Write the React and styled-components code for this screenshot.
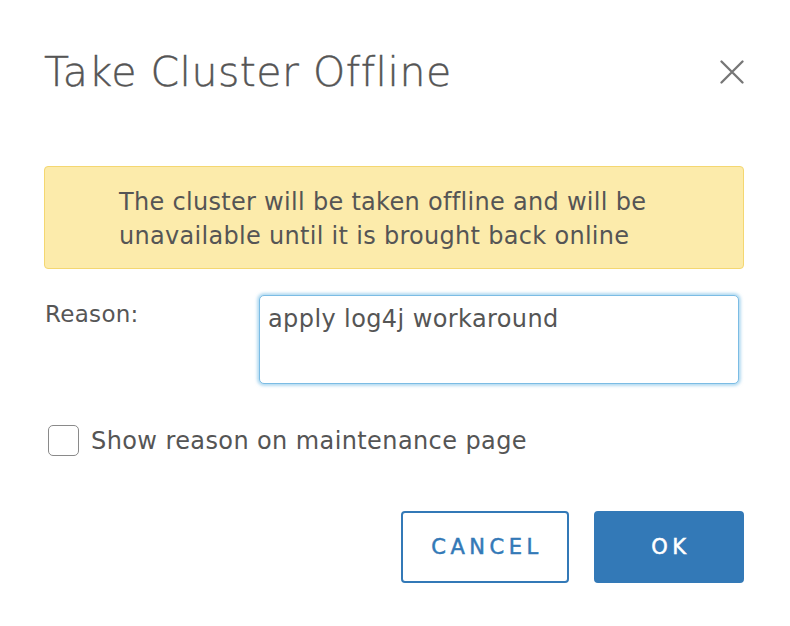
import React, { useState, useRef, useEffect } from "react";
import styled, { createGlobalStyle } from "styled-components";

const FONT = `"DejaVu Sans", "Open Sans", sans-serif`;

const GlobalStyle = createGlobalStyle`
  html, body {
    margin: 0;
    padding: 0;
    background: #ffffff;
  }
  body {
    font-family: ${FONT};
    color: #565656;
  }
`;

const App = () => {
  const [reason, setReason] = useState("apply log4j workaround");
  const [showReason, setShowReason] = useState(false);
  const reasonRef = useRef(null);

  // keep the caret at the end of the reason, as while typing
  useEffect(() => {
    const el = reasonRef.current;
    if (el) {
      el.focus();
      el.setSelectionRange(el.value.length, el.value.length);
    }
  }, []);

  return (
    <>
      <GlobalStyle />
      <Dialog>
        <Header>
          <Title>Take Cluster Offline</Title>
          <CloseButton aria-label="Close">
            <svg width="24" height="24" viewBox="0 0 24 24">
              <path
                d="M1.5 1.5 L22.5 22.5 M22.5 1.5 L1.5 22.5"
                stroke="#767676"
                strokeWidth="2.3"
                strokeLinecap="round"
              />
            </svg>
          </CloseButton>
        </Header>

        <Alert>
          The cluster will be taken offline and will be
          <br />
          unavailable until it is brought back online
        </Alert>

        <FormRow>
          <Label htmlFor="reason">Reason:</Label>
          <ReasonInput
            id="reason"
            ref={reasonRef}
            value={reason}
            onChange={e => setReason(e.target.value)}
          />
        </FormRow>

        <CheckRow>
          <CheckBox
            type="checkbox"
            checked={showReason}
            onChange={e => setShowReason(e.target.checked)}
          />
          Show reason on maintenance page
        </CheckRow>

        <Footer>
          <Button>CANCEL</Button>
          <Button primary>OK</Button>
        </Footer>
      </Dialog>
    </>
  );
};

const Dialog = styled.div`
  width: 790px;
  height: 626px;
  box-sizing: border-box;
  padding: 44px 46px 0 44px;
  display: flex;
  flex-direction: column;
`;

const Header = styled.div`
  display: flex;
  align-items: center;
  justify-content: space-between;
  height: 56px;
`;

const Title = styled.h1`
  margin: 0;
  font-size: 41px;
  font-weight: 300;
  letter-spacing: 0.5px;
  color: #555;
  -webkit-text-stroke: 0.4px #555;
`;

const CloseButton = styled.button`
  border: none;
  background: none;
  padding: 0;
  width: 24px;
  height: 24px;
  display: flex;
  cursor: pointer;
`;

const Alert = styled.div`
  margin-top: 66px;
  height: 103px;
  box-sizing: border-box;
  background: #fcebab;
  border: 1.5px solid #f4d771;
  border-radius: 4px;
  padding: 18px 20px 0 74px;
  font-size: 24px;
  letter-spacing: 0.3px;
  line-height: 34px;
  color: #555;
`;

const FormRow = styled.div`
  display: flex;
  align-items: flex-start;
  margin-top: 26px;
  padding-right: 5px;
`;

const Label = styled.label`
  width: 214px;
  flex-shrink: 0;
  font-size: 23px;
  letter-spacing: 0.3px;
  line-height: 30px;
  padding-top: 4px;
  padding-left: 1px;
  color: #565656;
`;

const ReasonInput = styled.textarea`
  flex: 1;
  height: 89px;
  box-sizing: border-box;
  resize: none;
  border: 1.5px solid #7bbce4;
  border-radius: 5px;
  box-shadow: 0 0 3px 2px rgba(121, 189, 229, 0.55);
  padding: 8px 8px 0;
  font-family: ${FONT};
  font-size: 24px;
  letter-spacing: 0.4px;
  line-height: 30px;
  color: #555;
  caret-color: #333;
  outline: none;
`;

const CheckRow = styled.label`
  display: flex;
  align-items: center;
  gap: 12px;
  margin-top: 41px;
  padding-left: 4px;
  font-size: 24px;
  letter-spacing: 0.4px;
  color: #555;
`;

const CheckBox = styled.input`
  appearance: none;
  margin: 0;
  width: 31px;
  height: 31px;
  border: 1.5px solid #8a8a8a;
  border-radius: 5px;
  background: #fff;
  box-sizing: border-box;
`;

const Footer = styled.div`
  display: flex;
  justify-content: flex-end;
  gap: 25px;
  margin-top: 55px;
`;

const Button = styled.button`
  height: 72px;
  width: ${p => (p.primary ? "150px" : "168px")};
  box-sizing: border-box;
  border-radius: 4px;
  border: 2px solid #3379b7;
  background: ${p => (p.primary ? "#3379b7" : "#ffffff")};
  color: ${p => (p.primary ? "#ffffff" : "#3379b7")};
  font-family: ${FONT};
  font-size: 21px;
  font-weight: 400;
  -webkit-text-stroke: 0.5px ${p => (p.primary ? "#ffffff" : "#3379b7")};
  letter-spacing: 4.5px;
  padding: 0 0 0 4px;
  cursor: pointer;
`;

export default App;
